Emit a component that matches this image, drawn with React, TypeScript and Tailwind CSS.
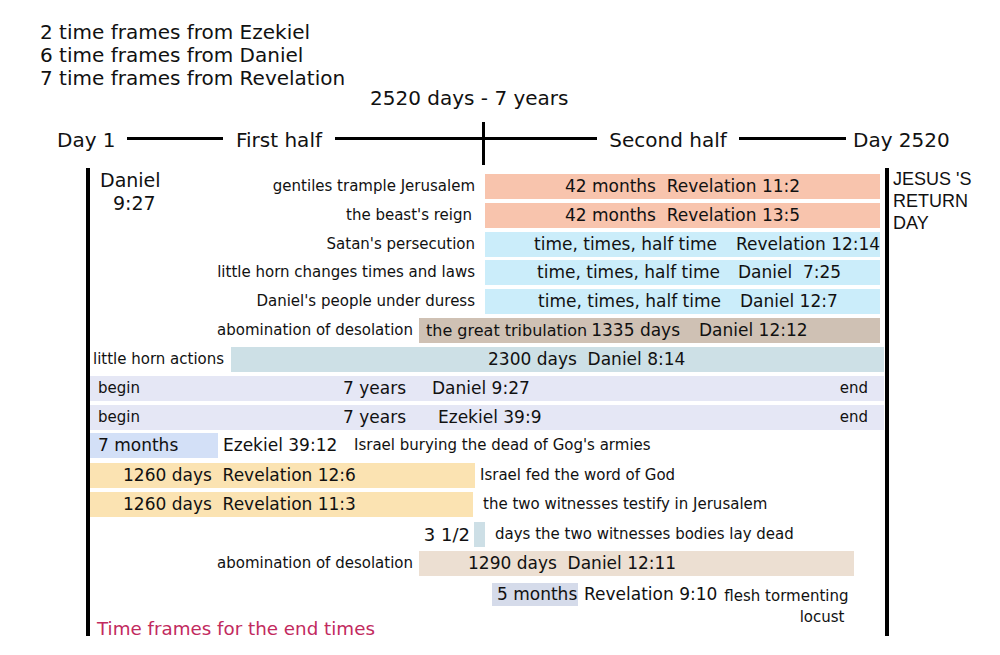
export default function App() {
  return (
    <div className="h-[655px] w-[1000px] overflow-hidden bg-white font-['DejaVu_Sans',sans-serif] text-[#111]">
      {/* ─── Header ─── */}
      <div className="pl-[40px] pt-[21px] text-[20px] leading-[23px]">
        <div>2 time frames from Ezekiel</div>
        <div>6 time frames from Daniel</div>
        <div>7 time frames from Revelation</div>
      </div>
      <div className="mt-[-4px] pl-[370px] text-[20px] leading-[24px]">2520 days - 7 years</div>

      {/* ─── Timeline ─── */}
      <div className="mt-[12px] flex h-[43px] items-start pl-[57px] text-[20px] leading-[24px]">
        <span className="mt-[6px] w-[70px] shrink-0">Day 1</span>
        <span className="mt-[15px] h-[3px] w-[96px] shrink-0 bg-black" />
        <span className="mt-[6px] w-[112px] shrink-0 text-center">First half</span>
        <span className="mt-[15px] h-[3px] w-[147px] shrink-0 bg-black" />
        <span className="h-[43px] w-[3px] shrink-0 bg-black" />
        <span className="mt-[15px] h-[3px] w-[112px] shrink-0 bg-black" />
        <span className="mt-[6px] w-[142px] shrink-0 text-center">Second half</span>
        <span className="mt-[15px] h-[3px] w-[107px] shrink-0 bg-black" />
        <span className="mt-[6px] ml-[7px] shrink-0">Day 2520</span>
      </div>

      {/* ─── Chart ─── */}
      <div className="mt-[3px] flex">
        <div className="ml-[86px] h-[468px] w-[803px] shrink-0 border-x-4 border-black">
          {/* Daniel 9:27 + 42 months */}
          <div className="flex">
            <div className="w-[100px] shrink-0 pl-[10px] pt-[1px] text-[19px] leading-[23px]">
              <div>Daniel</div>
              <div className="pl-[13px]">9:27</div>
            </div>
            <div className="pt-[6px]">
              <div className="flex h-[25px] items-center">
                <span className="w-[285px] shrink-0 text-right text-[15px]">gentiles trample Jerusalem</span>
                <div className="ml-[10px] flex h-full w-[395px] items-center justify-center bg-[#f8c4ad] text-[17px] whitespace-pre">
                  42 months  Revelation 11:2
                </div>
              </div>
              <div className="mt-[4px] flex h-[25px] items-center">
                <span className="w-[285px] shrink-0 pr-[3px] text-right text-[15px]">the beast's reign</span>
                <div className="ml-[10px] flex h-full w-[395px] items-center justify-center bg-[#f8c4ad] text-[17px] whitespace-pre">
                  42 months  Revelation 13:5
                </div>
              </div>
            </div>
          </div>

          {/* time, times, half time */}
          <div className="mt-[4px] flex h-[25px] items-center">
            <span className="w-[385px] shrink-0 text-right text-[15px]">Satan's persecution</span>
            <div className="ml-[10px] flex h-full w-[395px] items-center bg-[#cbedfa] pl-[49px] text-[17px] whitespace-pre">
              <span>time, times, half time</span>
              <span className="ml-[19px]">Revelation 12:14</span>
            </div>
          </div>
          <div className="mt-[3px] flex h-[25px] items-center">
            <span className="w-[385px] shrink-0 text-right text-[15px]">little horn changes times and laws</span>
            <div className="ml-[10px] flex h-full w-[395px] items-center bg-[#cbedfa] pl-[52px] text-[17px] whitespace-pre">
              <span>time, times, half time</span>
              <span className="ml-[18px]">Daniel  7:25</span>
            </div>
          </div>
          <div className="mt-[4px] flex h-[25px] items-center">
            <span className="w-[385px] shrink-0 text-right text-[15px]">Daniel's people under duress</span>
            <div className="ml-[10px] flex h-full w-[395px] items-center bg-[#cbedfa] pl-[53px] text-[17px] whitespace-pre">
              <span>time, times, half time</span>
              <span className="ml-[19px]">Daniel 12:7</span>
            </div>
          </div>

          {/* great tribulation */}
          <div className="mt-[4px] flex h-[25px] items-center">
            <span className="w-[323px] shrink-0 text-right text-[15px]">abomination of desolation</span>
            <div className="ml-[6px] flex h-full w-[461px] items-center bg-[#cfc1b4] pl-[7px] whitespace-pre">
              <span className="text-[16px]">the great tribulation</span>
              <span className="ml-[4px] text-[17px]">1335 days</span>
              <span className="ml-[19px] text-[17px]">Daniel 12:12</span>
            </div>
          </div>

          {/* 2300 days */}
          <div className="mt-[4px] flex h-[25px] items-center">
            <span className="w-[141px] shrink-0 pl-[3px] text-[15px]">little horn actions</span>
            <div className="flex h-full w-[653px] items-center bg-[#cde0e6] pl-[257px] text-[17px] whitespace-pre">
              2300 days  Daniel 8:14
            </div>
          </div>

          {/* 7 years */}
          <div className="mt-[4px] flex h-[25px] w-[794px] items-center bg-[#e5e7f5]">
            <span className="w-[253px] shrink-0 pl-[8px] text-[15px]">begin</span>
            <span className="w-[89px] shrink-0 text-[17px]">7 years</span>
            <span className="text-[17px]">Daniel 9:27</span>
            <span className="ml-auto pr-[16px] text-[15px]">end</span>
          </div>
          <div className="mt-[4px] flex h-[25px] w-[794px] items-center bg-[#e5e7f5]">
            <span className="w-[253px] shrink-0 pl-[8px] text-[15px]">begin</span>
            <span className="w-[95px] shrink-0 text-[17px]">7 years</span>
            <span className="text-[17px]">Ezekiel 39:9</span>
            <span className="ml-auto pr-[16px] text-[15px]">end</span>
          </div>

          {/* 7 months */}
          <div className="mt-[3px] flex h-[25px] items-center">
            <div className="flex h-full w-[128px] shrink-0 items-center bg-[#d3e0f7] pl-[8px] text-[17px]">7 months</div>
            <span className="ml-[5px] w-[131px] shrink-0 text-[17px]">Ezekiel 39:12</span>
            <span className="text-[15px]">Israel burying the dead of Gog's armies</span>
          </div>

          {/* 1260 days */}
          <div className="mt-[5px] flex h-[25px] items-center">
            <div className="flex h-full w-[385px] shrink-0 items-center bg-[#fbe3b2] pl-[33px] text-[17px] whitespace-pre">
              1260 days  Revelation 12:6
            </div>
            <span className="ml-[5px] text-[15px]">Israel fed the word of God</span>
          </div>
          <div className="mt-[4px] flex h-[25px] items-center">
            <div className="flex h-full w-[383px] shrink-0 items-center bg-[#fbe3b2] pl-[33px] text-[17px] whitespace-pre">
              1260 days  Revelation 11:3
            </div>
            <span className="ml-[10px] text-[15px]">the two witnesses testify in Jerusalem</span>
          </div>

          {/* 3 1/2 days */}
          <div className="mt-[5px] flex h-[25px] items-center">
            <span className="w-[380px] shrink-0 text-right text-[18px]">3 1/2</span>
            <span className="ml-[4px] h-full w-[11px] shrink-0 bg-[#cddfe6]" />
            <span className="ml-[10px] text-[15px]">days the two witnesses bodies lay dead</span>
          </div>

          {/* 1290 days */}
          <div className="mt-[4px] flex h-[25px] items-center">
            <span className="w-[323px] shrink-0 text-right text-[15px]">abomination of desolation</span>
            <div className="ml-[6px] flex h-full w-[435px] items-center bg-[#ecdfd2] pl-[49px] text-[17px] whitespace-pre">
              1290 days  Daniel 12:11
            </div>
          </div>

          {/* 5 months */}
          <div className="mt-[7px] flex h-[23px] items-center">
            <div className="ml-[402px] flex h-full w-[86px] shrink-0 items-center bg-[#d5dbea] pl-[5px] text-[17px]">5 months</div>
            <span className="ml-[6px] shrink-0 text-[17px]">Revelation 9:10</span>
            <div className="mt-[3px] ml-[7px] self-start text-right text-[15px] leading-[21px]">
              <div>flesh tormenting</div>
              <div className="pr-[4px]">locust</div>
            </div>
          </div>

          <div className="mt-[12px] pl-[7px] text-[18.3px] leading-[22px] text-[#c22a5e]">Time frames for the end times</div>
        </div>

        <div className="ml-[4px] font-['Liberation_Sans',Arial,sans-serif] text-[18px] leading-[22px]">
          <div>
            JESUS<span className="ml-[5px]">'S</span>
          </div>
          <div>RETURN</div>
          <div>DAY</div>
        </div>
      </div>
    </div>
  );
}
